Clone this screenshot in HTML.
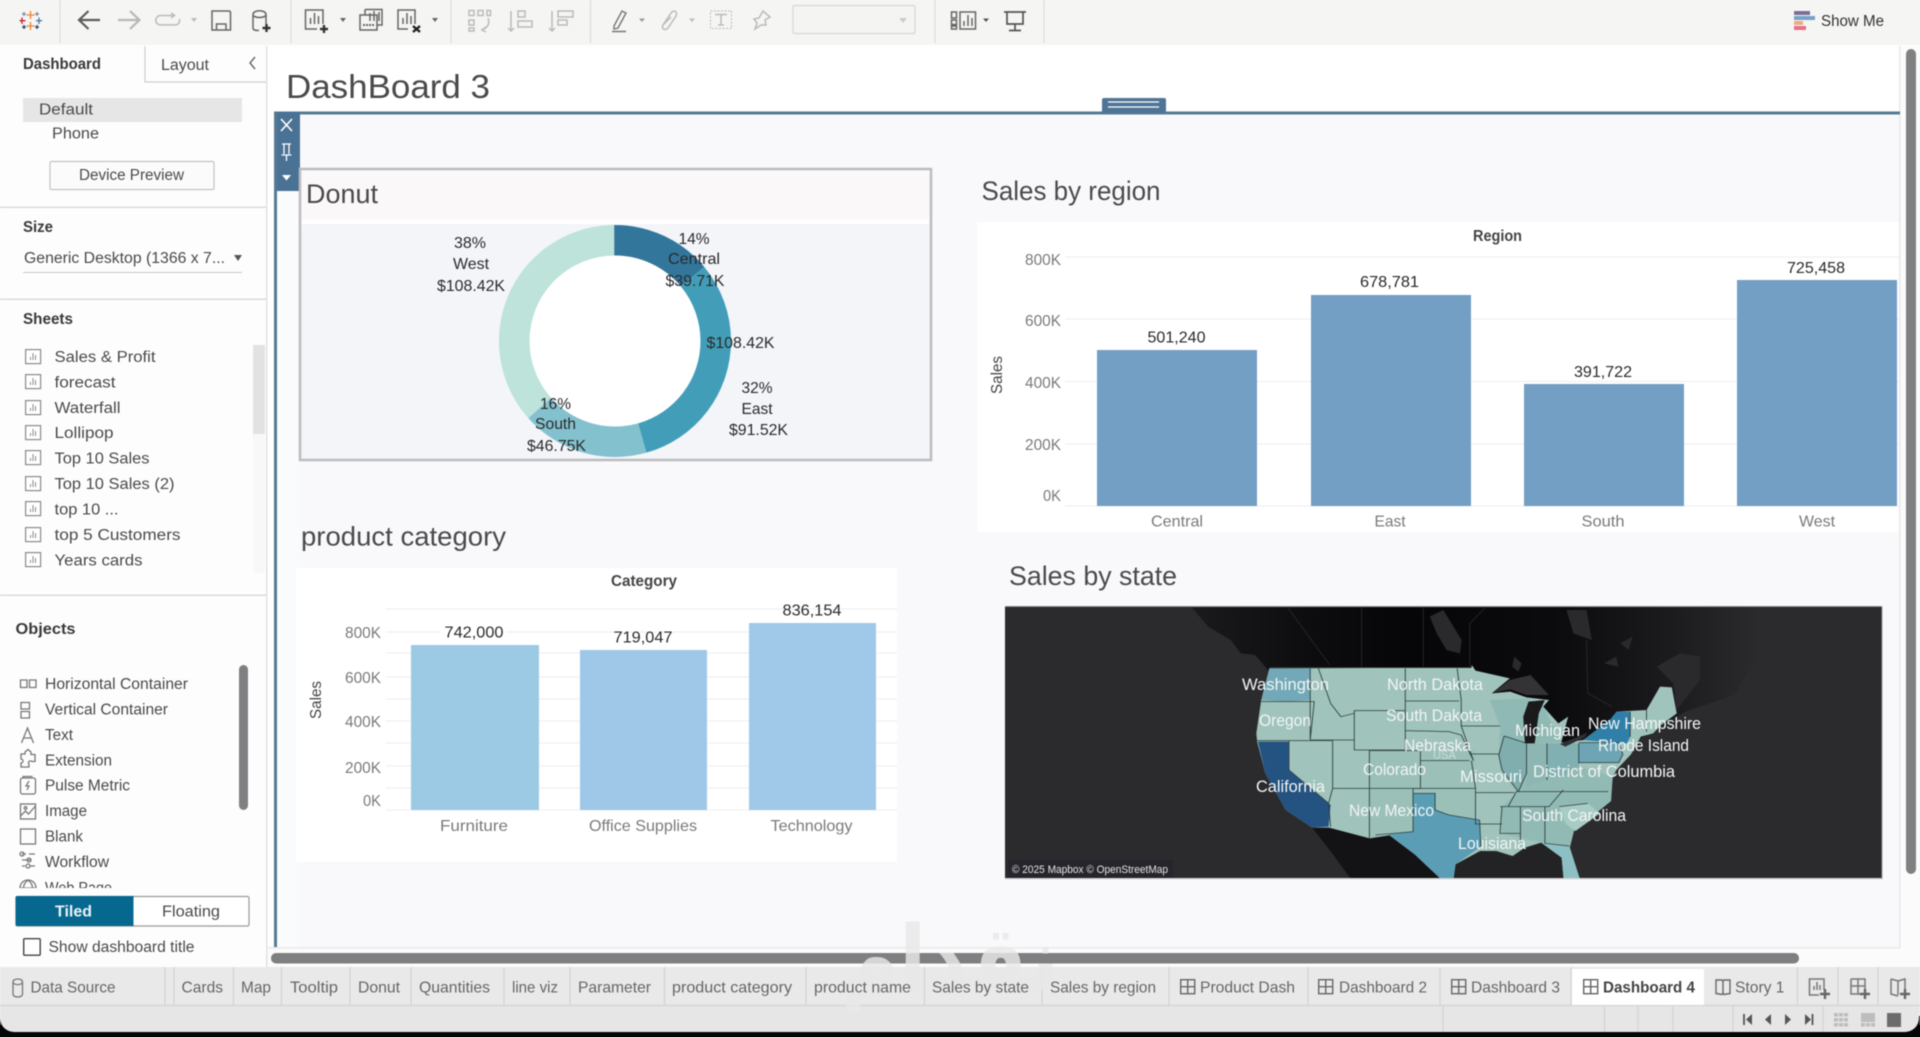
<!DOCTYPE html>
<html lang="en"><head><meta charset="utf-8"><title>DashBoard 3</title>
<style>
html,body{margin:0;padding:0;width:1920px;height:1037px;overflow:hidden;background:linear-gradient(#f8f8f8 0,#f8f8f8 1025px,#000 1025px)}
svg{display:block;filter:blur(.4px)}
text{font-family:"Liberation Sans",sans-serif;font-size:15.5px;fill:#4a4a4a}
.b{font-weight:bold;fill:#3a3a3a}
.g{fill:#7a7a7a;font-size:16px}
.k{fill:#2a2a2a;font-size:16px}
.m{text-anchor:middle}
.e{text-anchor:end}
.t{font-size:27px;fill:#4a4a4a}
.tab{fill:#666;font-size:16px}
.w{fill:#f2f5f5;font-size:16.5px}
.ic{fill:none;stroke:#666;stroke-width:1.5}
.ig{fill:none;stroke:#bbb;stroke-width:1.5}
.io{fill:none;stroke:#777;stroke-width:1.3}
.bd{fill:none;stroke:#2c3f40;stroke-width:2.2}
</style></head><body>
<svg xmlns="http://www.w3.org/2000/svg" width="1920" height="1037" viewBox="0 0 1920 1037">
<defs>
<g id="si"><rect x=".6" y=".6" width="15" height="14" fill="#fff" stroke="#8a8a8a" stroke-width="1.2"/><path d="M5.5 11V8M8 11V4M10.5 11V6" stroke="#8a8a8a" fill="none"/></g>
<g id="di"><rect x=".7" y=".7" width="14" height="14" fill="none" stroke="#666" stroke-width="1.4"/><path d="M7.7 .7V14.7M.7 7.7H14.7" stroke="#666" stroke-width="1.4"/></g>
<g id="sb"><path d="M1 1H7L8 2L8 14L7 15.5L1 14.5Z M8 2L9 1H15V14.5L9 15.5L8 14" fill="none" stroke="#666" stroke-width="1.4"/></g>
<clipPath id="mc"><rect x="12" y="22" width="2149" height="816"/></clipPath>
<clipPath id="oc"><rect x="0" y="670" width="235" height="218"/></clipPath>
<linearGradient id="ca" gradientUnits="userSpaceOnUse" x1="480" y1="0" x2="1860" y2="0">
<stop offset="0" stop-color="#1a1a1c"/><stop offset=".2" stop-color="#0d0d0f"/><stop offset=".38" stop-color="#060608"/><stop offset=".65" stop-color="#0c0c0e"/><stop offset=".85" stop-color="#1c1c1e"/><stop offset="1" stop-color="#2b2b2d"/>
</linearGradient>
</defs>

<rect width="1920" height="1037" fill="#fff"/>

<!-- canvas -->
<rect x="267" y="46" width="1633" height="66" fill="#fff"/>
<rect x="274" y="112" width="1626" height="835" fill="#f9f9fb"/>
<rect x="267" y="947" width="1653" height="20" fill="#fbfbfb"/>
<rect x="1900" y="46" width="20" height="921" fill="#fbfbfb"/>
<rect x="267" y="947" width="1633" height="1.5" fill="#eaeaea"/>
<rect x="1899" y="46" width="1.5" height="902" fill="#e8e8e8"/>

<text x="286" y="98" class="t" style="font-size:33px" textLength="204" lengthAdjust="spacingAndGlyphs">DashBoard 3</text>
<rect x="274" y="111.5" width="1626" height="3" fill="#567a94"/>
<rect x="274" y="112" width="3" height="835" fill="#567a94"/>
<path d="M1102 113V100Q1102 98 1104 98H1164Q1166 98 1166 100V113Z" fill="#4f7596"/>
<path d="M1108 102H1159M1108 107H1159" stroke="#fff" stroke-width="1.3"/>
<rect x="277" y="112" width="23" height="79" fill="#4a7295"/>
<rect x="277" y="191" width="23" height="756" fill="#fafbfc"/>
<path d="M281 119L292 131M292 119L281 131" stroke="#fff" stroke-width="1.6"/>
<path d="M282 144H291M284 144V154M289 144V154M281.500 155H291.500M286.500 155V161" stroke="#fff" stroke-width="1.3" fill="none"/>
<path d="M282 175H291L286.500 180.500Z" fill="#fff"/>

<!-- donut box -->
<rect x="300" y="168" width="631" height="292" fill="#f3f5f9"/>
<rect x="300" y="168" width="631" height="52" fill="#fbf8f9"/>
<rect x="302" y="220" width="627" height="4" fill="#fff"/>
<rect x="300" y="169" width="631" height="291" fill="none" stroke="#bcbcc0" stroke-width="2.5"/>
<text x="306" y="203" class="t" textLength="72" lengthAdjust="spacingAndGlyphs">Donut</text>
<circle cx="615" cy="341" r="85.500" fill="#fff"/>
<g transform="rotate(-90 615 341)" fill="none" stroke-width="30.500">
<circle cx="615" cy="341" r="100.750" pathLength="100" stroke="#bde3da" stroke-dasharray="36.500 63.500" stroke-dashoffset="-63.500"/>
<circle cx="615" cy="341" r="100.750" pathLength="100" stroke="#33769c" stroke-dasharray="14 86" stroke-dashoffset="0"/>
<circle cx="615" cy="341" r="100.750" pathLength="100" stroke="#429eb8" stroke-dasharray="31.700 68.300" stroke-dashoffset="-14"/>
<circle cx="615" cy="341" r="100.750" pathLength="100" stroke="#84c1cf" stroke-dasharray="17.800 82.200" stroke-dashoffset="-45.700"/>
</g>
<text x="470" y="248" class="k m" textLength="32" lengthAdjust="spacingAndGlyphs">38%</text>
<text x="471" y="269" class="k m" textLength="36" lengthAdjust="spacingAndGlyphs">West</text>
<text x="471" y="291" class="k m" textLength="68" lengthAdjust="spacingAndGlyphs">$108.42K</text>
<text x="694" y="244" class="k m" textLength="31" lengthAdjust="spacingAndGlyphs">14%</text>
<text x="694" y="264" class="k m" textLength="52" lengthAdjust="spacingAndGlyphs">Central</text>
<text x="695" y="286" class="k m" textLength="59" lengthAdjust="spacingAndGlyphs">$39.71K</text>
<text x="706.500" y="348" class="k" textLength="68" lengthAdjust="spacingAndGlyphs">$108.42K</text>
<text x="757" y="393" class="k m" textLength="31" lengthAdjust="spacingAndGlyphs">32%</text>
<text x="757" y="414" class="k m" textLength="31" lengthAdjust="spacingAndGlyphs">East</text>
<text x="758.500" y="435" class="k m" textLength="59" lengthAdjust="spacingAndGlyphs">$91.52K</text>
<text x="555.500" y="409" class="k m" textLength="31" lengthAdjust="spacingAndGlyphs">16%</text>
<text x="555.500" y="429" class="k m" textLength="41" lengthAdjust="spacingAndGlyphs">South</text>
<text x="556.500" y="451" class="k m" textLength="59" lengthAdjust="spacingAndGlyphs">$46.75K</text>

<!-- sales by region -->
<text x="981.500" y="200" class="t" textLength="179" lengthAdjust="spacingAndGlyphs">Sales by region</text>
<rect x="977" y="222" width="922" height="310" fill="#fff"/>
<text x="1497.500" y="241" class="m b" style="fill:#444" textLength="49" lengthAdjust="spacingAndGlyphs">Region</text>
<path d="M1065 257H1899M1065 319H1899M1065 381.500H1899M1065 444H1899M1065 506H1899" stroke="#f0f0f2" stroke-width="1.2"/>
<g fill="#749fc5"><rect x="1097" y="350" width="160" height="156"/><rect x="1311" y="295" width="160" height="211"/><rect x="1524" y="384" width="160" height="122"/><rect x="1737" y="280" width="160" height="226"/></g>
<text x="1061" y="265" class="g e" textLength="36" lengthAdjust="spacingAndGlyphs">800K</text>
<text x="1061" y="326" class="g e" textLength="36" lengthAdjust="spacingAndGlyphs">600K</text>
<text x="1061" y="388" class="g e" textLength="36" lengthAdjust="spacingAndGlyphs">400K</text>
<text x="1061" y="450" class="g e" textLength="36" lengthAdjust="spacingAndGlyphs">200K</text>
<text x="1061" y="501" class="g e" textLength="18" lengthAdjust="spacingAndGlyphs">0K</text>
<text x="1176.500" y="342.500" class="k m" textLength="58" lengthAdjust="spacingAndGlyphs">501,240</text>
<text x="1389.500" y="287" class="k m" textLength="59" lengthAdjust="spacingAndGlyphs">678,781</text>
<text x="1603" y="377" class="k m" textLength="58" lengthAdjust="spacingAndGlyphs">391,722</text>
<text x="1816" y="273" class="k m" textLength="58" lengthAdjust="spacingAndGlyphs">725,458</text>
<text x="1177" y="526.500" class="g m" textLength="52" lengthAdjust="spacingAndGlyphs">Central</text>
<text x="1390" y="526.500" class="g m" textLength="31" lengthAdjust="spacingAndGlyphs">East</text>
<text x="1603" y="526.500" class="g m" textLength="43" lengthAdjust="spacingAndGlyphs">South</text>
<text x="1817" y="526.500" class="g m" textLength="36" lengthAdjust="spacingAndGlyphs">West</text>
<text transform="translate(1002 375) rotate(-90)" class="m" style="fill:#444" textLength="38" lengthAdjust="spacingAndGlyphs">Sales</text>

<!-- product category -->
<text x="301" y="545.500" class="t" textLength="205" lengthAdjust="spacingAndGlyphs">product category</text>
<rect x="296" y="568" width="601" height="294" fill="#fff"/>
<text x="644" y="586" class="m b" style="fill:#444" textLength="66" lengthAdjust="spacingAndGlyphs">Category</text>
<path d="M386 609H897M386 632H897M386 653H897M386 677H897M386 699H897M386 721H897M386 743H897M386 766H897M386 788H897M386 810H897" stroke="#f0f0f2" stroke-width="1.2"/>
<rect x="411" y="645" width="128" height="165" fill="#9ccae5"/>
<rect x="580" y="650" width="127" height="160" fill="#9fc7e8"/>
<rect x="749" y="623" width="127" height="187" fill="#a0c8e8"/>
<text x="381" y="638" class="g e" textLength="36" lengthAdjust="spacingAndGlyphs">800K</text>
<text x="381" y="683" class="g e" textLength="36" lengthAdjust="spacingAndGlyphs">600K</text>
<text x="381" y="727" class="g e" textLength="36" lengthAdjust="spacingAndGlyphs">400K</text>
<text x="381" y="773" class="g e" textLength="36" lengthAdjust="spacingAndGlyphs">200K</text>
<text x="381" y="806" class="g e" textLength="18" lengthAdjust="spacingAndGlyphs">0K</text>
<rect x="440" y="622" width="66" height="20" fill="#fff"/>
<text x="474" y="637.500" class="k m" textLength="59" lengthAdjust="spacingAndGlyphs">742,000</text>
<text x="643" y="642.500" class="k m" textLength="59" lengthAdjust="spacingAndGlyphs">719,047</text>
<text x="812" y="615.500" class="k m" textLength="59" lengthAdjust="spacingAndGlyphs">836,154</text>
<text x="474" y="831" class="g m" textLength="68" lengthAdjust="spacingAndGlyphs">Furniture</text>
<text x="643" y="831" class="g m" textLength="108" lengthAdjust="spacingAndGlyphs">Office Supplies</text>
<text x="811.500" y="831" class="g m" textLength="82" lengthAdjust="spacingAndGlyphs">Technology</text>
<text transform="translate(321 700) rotate(-90)" class="m" style="fill:#444" textLength="38" lengthAdjust="spacingAndGlyphs">Sales</text>

<!-- map -->
<text x="1009" y="585" class="t" textLength="168" lengthAdjust="spacingAndGlyphs">Sales by state</text>
<rect x="1005" y="607" width="877" height="272" fill="#2b2b2d"/>
<g transform="translate(1000 600) scale(.40816 .33333)" clip-path="url(#mc)">
<path d="M470 22L1860 22L1880 120L1800 285L1680 335L1550 430L1300 450L660 215L625 165L590 160L565 120L510 80Z" fill="url(#ca)"/>
<path d="M1053 50L1086 30L1131 120L1127 160L1094 150L1070 100ZM1388 30L1437 30L1450 120L1405 100ZM1609 200L1666 160L1715 170L1715 240L1658 330L1650 250ZM1260 170L1278 190L1270 215L1255 200ZM1480 190L1510 170L1515 200ZM1520 130L1550 110L1540 150Z" fill="#2a2a2c"/>
<path d="M886 22V200M1037 22V200M1188 25L1151 70V200M706 25L808 195M1437 120L1440 280L1500 320" stroke="#2c2c2e" stroke-width="2" fill="none"/>
<path d="M1176 753L1116 793L1111 838H1380L1376 773L1326 728L1286 743L1256 768L1216 753Z" fill="#232325"/>
<path d="M765 683L806 683L906 715L951 703L1016 763L1081 838L860 838L820 770Z" fill="#131315"/>
<path d="M660 205L1155 203L1156 195L1165 212L1249 235L1205 280L1250 275L1290 292L1345 300L1331 320L1368 370L1392 350L1375 428L1429 420L1494 360L1511 335L1584 330L1617 260L1646 262L1658 340L1620 375L1600 400L1570 410L1546 463L1510 510L1501 533L1497 603L1406 693L1396 743L1421 838L1381 838L1376 773L1326 728L1286 743L1256 768L1216 753L1176 753L1116 793L1111 838L1081 838L1016 763L951 703L906 715L806 683L765 683L700 630L650 520L630 425L628 400L640 300Z" fill="#a0c3bb"/>
<path d="M1225 378L1290 430L1290 520L1420 500L1500 530L1497 603L1406 693L1396 743L1326 728L1230 700L1230 620L1270 575L1222 465Z" fill="#92bab4"/>
<path d="M905 452H1165V660L1012 695L905 715Z" fill="#9bc0b8"/>
<path d="M1200 300L1290 296L1331 320L1375 428L1290 430L1235 408Z" fill="#8fb9b4"/>
<path d="M660 205H760V300L700 305L640 300Z" fill="#72a8b7"/>
<path d="M632 425H708V510L810 615L805 680L765 683L700 630L650 520Z" fill="#245382"/>
<path d="M1012 580H1066V630L1100 645L1175 660L1178 740L1116 793L1111 838L1081 838L1016 763L951 703L1012 695Z" fill="#5b9db4"/>
<path d="M1429 420L1494 360L1511 335L1544 335V410L1536 430Z" fill="#2f7fa8"/>
<path d="M1418 428H1516L1526 463L1516 488H1418Z" fill="#6da5b4"/>
<path d="M1235 408L1290 430V520L1270 575L1230 510L1222 465Z" fill="#80aeae"/>
<path d="M1290 430H1340V540L1290 560Z" fill="#8db6b2"/>
<path d="M1340 430H1418V500L1380 530L1340 530Z" fill="#80b0b2"/>
<path d="M1326 728L1396 743L1421 838L1381 838L1376 773Z" fill="#8cc0c4"/>
<path d="M1370 620L1440 610L1470 640L1410 693L1385 670Z" fill="#a8cbc4"/>
<path d="M1282 350L1295 305L1335 300L1320 340L1310 430L1286 430Z" fill="#1a1a1c"/>
<path d="M1209 278L1249 240L1300 225L1345 285L1290 285L1250 268Z" fill="#333335"/>
<path d="M1372 432L1440 398L1432 412L1385 440Z" fill="#303032"/>
<g class="bd">
<path d="M660 203H1155M760 205V420M640 305L700 305L770 305L760 420"/>
<path d="M780 205L810 310L835 350L868 340"/>
<path d="M868 332H993V450H868ZM760 420H868"/>
<path d="M993 205V332M993 303H1125M993 392L1100 395L1130 405L1160 482"/>
<path d="M1030 452V482H1150M905 452H1030V565H905Z"/>
<path d="M815 422V565H905M630 422H815M708 422V510L805 610L810 680M815 565L805 610"/>
<path d="M905 565V715M1012 565V695L920 705M1012 565H1165"/>
<path d="M1012 580H1066V630L1100 645L1175 660L1178 740"/>
<path d="M1155 482L1165 565V672L1175 672M1165 578H1260M1175 672H1230"/>
<path d="M1120 205L1130 300V378H1225M1150 462H1222M1130 378L1160 482"/>
<path d="M1235 408L1290 430V520L1270 575L1230 510L1222 465L1235 408"/>
<path d="M1340 430V540M1418 430V490M1418 428H1516L1526 463L1516 488H1418"/>
<path d="M1225 620H1345M1230 620L1225 700H1275M1275 620V725M1335 620V730L1395 738M1245 620L1265 575H1490M1380 570L1345 620M1370 620L1440 610"/>
<path d="M1544 335V410M1584 330V395"/>
</g>
</g>
<rect x="1005" y="878" width="877" height="1.500" fill="#d8d8d8"/>
<rect x="1005" y="606" width="877" height="1" fill="#888"/>
<rect x="1881.500" y="607" width="1" height="272" fill="#999"/>
<rect x="1008" y="860" width="165" height="18" fill="#25252b"/>
<text x="1012" y="873" style="font-size:11px;fill:#e4e4e8" textLength="156" lengthAdjust="spacingAndGlyphs">© 2025 Mapbox © OpenStreetMap</text>
<text x="1433" y="759" style="font-size:12px;fill:#c8dcd8" textLength="23" lengthAdjust="spacingAndGlyphs">USA</text>
<text x="1242" y="690" class="w" textLength="87" lengthAdjust="spacingAndGlyphs">Washington</text>
<text x="1387" y="690" class="w" textLength="96" lengthAdjust="spacingAndGlyphs">North Dakota</text>
<text x="1259" y="726" class="w" textLength="52" lengthAdjust="spacingAndGlyphs">Oregon</text>
<text x="1386" y="721" class="w" textLength="96" lengthAdjust="spacingAndGlyphs">South Dakota</text>
<text x="1515" y="736" class="w" textLength="65" lengthAdjust="spacingAndGlyphs">Michigan</text>
<text x="1588" y="729" class="w" textLength="113" lengthAdjust="spacingAndGlyphs">New Hampshire</text>
<text x="1598" y="751" class="w" textLength="91" lengthAdjust="spacingAndGlyphs">Rhode Island</text>
<text x="1404" y="751" class="w" textLength="67" lengthAdjust="spacingAndGlyphs">Nebraska</text>
<text x="1363" y="775" class="w" textLength="63" lengthAdjust="spacingAndGlyphs">Colorado</text>
<text x="1460" y="782" class="w" textLength="62" lengthAdjust="spacingAndGlyphs">Missouri</text>
<text x="1533" y="777" class="w" textLength="142" lengthAdjust="spacingAndGlyphs">District of Columbia</text>
<text x="1256" y="792" class="w" textLength="69" lengthAdjust="spacingAndGlyphs">California</text>
<text x="1349" y="816" class="w" textLength="85" lengthAdjust="spacingAndGlyphs">New Mexico</text>
<text x="1522" y="821" class="w" textLength="104" lengthAdjust="spacingAndGlyphs">South Carolina</text>
<text x="1458" y="849" class="w" textLength="68" lengthAdjust="spacingAndGlyphs">Louisiana</text>

<!-- scrollbars -->
<rect x="1906" y="49" width="10" height="825" rx="5" fill="#808082"/>
<rect x="271" y="953" width="1528" height="10.500" rx="5" fill="#7f7f82"/>

<!-- left panel -->
<rect x="0" y="46" width="266" height="921" fill="#fdfdfd"/>
<rect x="266" y="46" width="1.500" height="921" fill="#e2e2e2"/>
<path d="M145 46V82H266" fill="none" stroke="#cfcfcf" stroke-width="1.2"/>
<text x="23" y="69" class="b" textLength="78" lengthAdjust="spacingAndGlyphs">Dashboard</text>
<text x="161" y="70" textLength="48" lengthAdjust="spacingAndGlyphs">Layout</text>
<path d="M255 57L250 63L255 69" fill="none" stroke="#666" stroke-width="1.4"/>
<rect x="23" y="98" width="219" height="24" fill="#e6e6e6"/>
<text x="39" y="114.500" textLength="54" lengthAdjust="spacingAndGlyphs">Default</text>
<text x="52" y="138.500" textLength="47" lengthAdjust="spacingAndGlyphs">Phone</text>
<rect x="50" y="161.500" width="164" height="28" rx="1.500" fill="#fcfbfc" stroke="#c4c4c4" stroke-width="1.200"/>
<text x="79" y="180" textLength="105" lengthAdjust="spacingAndGlyphs">Device Preview</text>
<rect x="0" y="206.500" width="266" height="1.400" fill="#d8d8d8"/>
<text x="23" y="232" class="b" textLength="30" lengthAdjust="spacingAndGlyphs">Size</text>
<text x="24" y="263" textLength="201" lengthAdjust="spacingAndGlyphs">Generic Desktop (1366 x 7...</text>
<path d="M234 255H242L238 261Z" fill="#555"/>
<rect x="23" y="272" width="219" height="1" fill="#c8c8c8"/>
<rect x="0" y="298.500" width="266" height="1.400" fill="#d8d8d8"/>
<text x="23" y="324" class="b" textLength="50" lengthAdjust="spacingAndGlyphs">Sheets</text>
<rect x="253" y="345" width="12" height="228" fill="#f8f8f8"/>
<rect x="253" y="345" width="12" height="89" fill="#e2e2e2"/>
<use href="#si" x="25" y="349"/><text x="54.500" y="362" textLength="101" lengthAdjust="spacingAndGlyphs">Sales &amp; Profit</text>
<use href="#si" x="25" y="374"/><text x="54.500" y="387.500" textLength="61" lengthAdjust="spacingAndGlyphs">forecast</text>
<use href="#si" x="25" y="400"/><text x="54.500" y="413" textLength="66" lengthAdjust="spacingAndGlyphs">Waterfall</text>
<use href="#si" x="25" y="425"/><text x="54.500" y="438" textLength="59" lengthAdjust="spacingAndGlyphs">Lollipop</text>
<use href="#si" x="25" y="450"/><text x="54.500" y="463.500" textLength="95" lengthAdjust="spacingAndGlyphs">Top 10 Sales</text>
<use href="#si" x="25" y="476"/><text x="54.500" y="489" textLength="120" lengthAdjust="spacingAndGlyphs">Top 10 Sales (2)</text>
<use href="#si" x="25" y="501"/><text x="54.500" y="514.500" textLength="64" lengthAdjust="spacingAndGlyphs">top 10 ...</text>
<use href="#si" x="25" y="527"/><text x="54.500" y="540" textLength="126" lengthAdjust="spacingAndGlyphs">top 5 Customers</text>
<use href="#si" x="25" y="552"/><text x="54.500" y="565.500" textLength="88" lengthAdjust="spacingAndGlyphs">Years cards</text>
<rect x="0" y="594.500" width="266" height="1.400" fill="#d8d8d8"/>
<text x="15.500" y="634" class="b" textLength="60" lengthAdjust="spacingAndGlyphs">Objects</text>
<g clip-path="url(#oc)">
<text x="45" y="689" textLength="143" lengthAdjust="spacingAndGlyphs">Horizontal Container</text>
<text x="45" y="714.500" textLength="123" lengthAdjust="spacingAndGlyphs">Vertical Container</text>
<text x="45" y="740" textLength="28" lengthAdjust="spacingAndGlyphs">Text</text>
<text x="45" y="765.500" textLength="67" lengthAdjust="spacingAndGlyphs">Extension</text>
<text x="45" y="790.500" textLength="85" lengthAdjust="spacingAndGlyphs">Pulse Metric</text>
<text x="45" y="816" textLength="42" lengthAdjust="spacingAndGlyphs">Image</text>
<text x="45" y="841.500" textLength="38" lengthAdjust="spacingAndGlyphs">Blank</text>
<text x="45" y="867" textLength="64" lengthAdjust="spacingAndGlyphs">Workflow</text>
<text x="45" y="893" textLength="67" lengthAdjust="spacingAndGlyphs">Web Page</text>
<g class="io">
<path d="M20.500 680h6.500v7.500h-6.500zM29.500 680h6.500v7.500h-6.500z"/>
<path d="M21 702.500h8.500v6.500h-8.500zM21 711.500h8.500v6.500h-8.500z"/>
<path d="M21.500 743L27.500 728L33.500 743M23.500 738H31.500"/>
<path d="M25 752l3-2.500 3 2.500v2.500h4v7h-3a2 2 0 0 0-3 3v2.500h-8v-4a2 2 0 0 0 0-4v-5h4z"/>
<rect x="20.500" y="778" width="15" height="16" rx="2"/><path d="M23 778v-1.500h9.500M29 781l-3 5h3l-2 4"/>
<rect x="20.500" y="804" width="15" height="15"/><path d="M20.500 816l5-5 3 3 7-8"/><circle cx="25.500" cy="808" r="1.300"/>
<rect x="20.500" y="829" width="15" height="15"/>
<path d="M22 854h4M29 854h6M22 860h9M22 866h3M30 866h5M20 854a2 2 0 1 0 4 0a2 2 0 1 0-4 0M27 860a2 2 0 1 0 4 0a2 2 0 1 0-4 0M26 866a2 2 0 1 0 4 0a2 2 0 1 0-4 0"/>
<circle cx="28" cy="888" r="8"/><path d="M20 888h16M28 880c-6 5-6 11 0 16M28 880c6 5 6 11 0 16"/>
</g>
</g>
<rect x="239" y="665" width="9" height="145" rx="4.500" fill="#808082"/>
<rect x="16" y="896.500" width="233" height="29.500" rx="1.500" fill="#fff" stroke="#9a9a9a" stroke-width="1.200"/>
<path d="M17 896H133.500V926H17A1.500 1.500 0 0 1 15.500 924.500V897.500A1.500 1.500 0 0 1 17 896Z" fill="#07688f"/>
<text x="73.500" y="916.500" class="m b" style="fill:#eaf3f7" textLength="37" lengthAdjust="spacingAndGlyphs">Tiled</text>
<text x="191" y="916.500" class="m" textLength="58" lengthAdjust="spacingAndGlyphs">Floating</text>
<rect x="23.700" y="938.700" width="16.500" height="16.500" rx="1" fill="#fff" stroke="#444" stroke-width="1.400"/>
<text x="48.500" y="952" textLength="146" lengthAdjust="spacingAndGlyphs">Show dashboard title</text>

<!-- toolbar -->
<rect x="0" y="0" width="1920" height="45" fill="#f5f5f4"/>
<path d="M60 0V43M291 0V43M451 0V43M590.500 0V43M935 0V43M1044 0V43" stroke="#dcdcdc" stroke-width="1.200"/>
<g stroke-width="1.300" fill="none">
<path d="M30.500 11V19M26.500 15H34.500M30.500 22V30M26.500 26H34.500" stroke="#e8862c"/>
<path d="M22 17.500V24M19.500 20.700H25.500" stroke="#c72037"/>
<path d="M39 17.500V24M36 20.700H42" stroke="#4e7c9c"/>
<path d="M24 12V16M22 14H26M37 12V16M35 14H39" stroke="#7c86a2"/>
<path d="M24 25V29M22 27H26M37 25V29M35 27H39" stroke="#1f447e"/>
</g>
<path d="M100 20H79M88.500 11L79 20L88.500 29" fill="none" stroke="#5c5c5c" stroke-width="2.200"/>
<path d="M118 20H139M130 11L139.500 20L130 29" fill="none" stroke="#b8b8b8" stroke-width="2.200"/>
<path d="M174 15.500H160.500a4.700 4.700 0 0 0 0 9.400H175a4.700 4.700 0 0 0 4.500-6M171 13l3.500 2.500-3.500 2.500" class="ig"/>
<path d="M191 18H197L194 22Z" fill="#bbb"/>
<path d="M212 11H229.500L230.500 12V30H212Z" class="ic"/><path d="M216.500 30V24H226V30" class="ic"/>
<path d="M253 14.500C253 9.500 266 9.500 266 14.500V24M253 14.500C253 18.500 266 18.500 266 14.500M253 14.500V28C253 30 255 30.500 259 30.500" class="ic"/>
<path d="M266.500 24V32M262.500 28H270.500" stroke="#333" stroke-width="2.400"/>
<path d="M323 24V10H305.500V29H317M310.500 24V18M314.500 24V13M318.500 24V16" class="ic"/>
<path d="M324 25V33M320 29H328" stroke="#333" stroke-width="2.400"/>
<path d="M340 18H346L343 22Z" fill="#666"/>
<path d="M365 9.500H382V25H377M365 9.500V15M360 15H377V30H360ZM370 13V21M374 11V21M379 12V21" class="ic"/>
<path d="M363 25H374" stroke="#666" stroke-width="2" stroke-dasharray="2 1"/>
<path d="M415 24V10H398V29H408M403 24V18M407 24V13M411 24V16" class="ic"/>
<path d="M413 26L420 32M420 26L413 32" stroke="#222" stroke-width="2.400"/>
<path d="M432 18H438L435 22Z" fill="#666"/>
<g class="ig">
<path d="M469 10.500h5v5h-5zM478 10.500h5v5h-5zM487 10.500h3.500v5h-3.500zM469 20h5v5h-5zM469 28h5v3h-5zM488 18c2 6 0 10-7 12M486 27l-4 3 4 2"/>
<path d="M511 11V31M508 28l3 3 3-3M518 11h7v6h-7zM518 21h14v6h-14z"/>
<path d="M552 11V31M549 28l3 3 3-3M558 11h15v6h-15zM558 20h9v5h-9z"/>
</g>
<path d="M614 26L622 11L626 13L618 28L614 29ZM612 31.500H626" fill="none" stroke="#777" stroke-width="1.400"/>
<path d="M639 18.500H645L642 22Z" fill="#999"/>
<path d="M663 25L671 13C674 9 678 12 676 16L668 28C665 31 661 29 663 25L671 17" class="ig"/>
<path d="M689 18.500H695L692 22Z" fill="#bbb"/>
<rect x="710.500" y="11" width="21" height="17.500" fill="none" stroke="#bbb" stroke-dasharray="2 1.500"/>
<path d="M715 14.500H727M721 14.500V25M718 25H724" class="ig"/>
<path d="M763 11L770 17L765 20L766 25L761 25L755 29L757 23L754 19L759 18Z" class="ig"/>
<rect x="793" y="5.500" width="122" height="28" rx="1.500" fill="#f4f4f3" stroke="#d6d6d6" stroke-width="1.200"/>
<path d="M899 18H907L903 23Z" fill="#ccc"/>
<path d="M951.500 12h5v6h-5zM951.500 20h5v4.500h-5zM951.500 26h5v3h-5zM960 12h15.500v17H960ZM964 26V21M968 26V15M972 26V18" class="ic"/>
<path d="M983 18.500H989L986 22Z" fill="#555"/>
<path d="M1004 12H1026M1007 12.500V24H1023V12.500M1015 24V30.500M1009 30.500H1021" fill="none" stroke="#555" stroke-width="1.700"/>
<rect x="1794" y="11" width="16" height="4" fill="#7a6f97"/><rect x="1794" y="16" width="21" height="4" fill="#79a0c9"/><rect x="1794" y="21" width="9" height="4" fill="#eeaa80"/><rect x="1794" y="26" width="12" height="4" fill="#e8708a"/>
<text x="1821" y="26" style="fill:#333" textLength="63" lengthAdjust="spacingAndGlyphs">Show Me</text>

<!-- bottom -->
<rect x="0" y="967" width="1920" height="70" fill="#e9e9e9"/>
<rect x="0" y="1016" width="1920" height="21" fill="#050505"/>
<rect x="0" y="1004" width="1919" height="28" rx="14" fill="#e6e6e6"/>
<rect x="0" y="1004" width="1919" height="14" fill="#e6e6e6"/>
<rect x="0" y="1005" width="1920" height="1.200" fill="#d4d4d4"/>
<path d="M165 967V1005M174 967V1005M233.500 967V1005M281.500 967V1005M350 967V1005M411 967V1005M504 967V1005M570 967V1005M664.500 967V1005M806 967V1005M924.500 967V1005M1042 967V1005M1169 967V1005M1308 967V1005M1440 967V1005M1571 967V1005M1797.500 967V1005M1838 967V1005M1878 967V1005M1443 1006V1032M1604.500 1006V1032M1638 1006V1032M1673 1006V1032M1733 1006V1032M1823 1006V1032" stroke="#d2d2d2" stroke-width="1.200"/>
<rect x="1572" y="969" width="132" height="36" fill="#fff"/>

<!-- watermark, below the tab labels -->
<text x="950" y="990" dir="rtl" textLength="218" lengthAdjust="spacingAndGlyphs" style="font-family:'DejaVu Sans',sans-serif;font-size:90px;font-weight:bold;fill:#e8e8e8;fill-opacity:.82;text-anchor:middle">نقدام</text>

<path d="M13 982C13 978 22.500 978 22.500 982V994C22.500 998 13 998 13 994ZM13 982C13 985.500 22.500 985.500 22.500 982" fill="none" stroke="#777" stroke-width="1.300"/>
<text x="30.500" y="992.500" class="tab" textLength="85" lengthAdjust="spacingAndGlyphs">Data Source</text>
<text x="181.500" y="992.500" class="tab" textLength="41.500" lengthAdjust="spacingAndGlyphs">Cards</text>
<text x="241" y="992.500" class="tab" textLength="30" lengthAdjust="spacingAndGlyphs">Map</text>
<text x="290" y="992.500" class="tab" textLength="48" lengthAdjust="spacingAndGlyphs">Tooltip</text>
<text x="358" y="992.500" class="tab" textLength="42" lengthAdjust="spacingAndGlyphs">Donut</text>
<text x="419" y="992.500" class="tab" textLength="71" lengthAdjust="spacingAndGlyphs">Quantities</text>
<text x="512" y="992.500" class="tab" textLength="46" lengthAdjust="spacingAndGlyphs">line viz</text>
<text x="578" y="992.500" class="tab" textLength="73" lengthAdjust="spacingAndGlyphs">Parameter</text>
<text x="672" y="992.500" class="tab" textLength="120" lengthAdjust="spacingAndGlyphs">product category</text>
<text x="814" y="992.500" class="tab" textLength="97" lengthAdjust="spacingAndGlyphs">product name</text>
<text x="932" y="992.500" class="tab" textLength="97" lengthAdjust="spacingAndGlyphs">Sales by state</text>
<text x="1050" y="992.500" class="tab" textLength="106" lengthAdjust="spacingAndGlyphs">Sales by region</text>
<use href="#di" x="1180" y="979"/><text x="1200" y="992.500" class="tab" textLength="95" lengthAdjust="spacingAndGlyphs">Product Dash</text>
<use href="#di" x="1318" y="979"/><text x="1339" y="992.500" class="tab" textLength="88" lengthAdjust="spacingAndGlyphs">Dashboard 2</text>
<use href="#di" x="1451" y="979"/><text x="1471" y="992.500" class="tab" textLength="89" lengthAdjust="spacingAndGlyphs">Dashboard 3</text>
<use href="#di" x="1583" y="979"/><text x="1603" y="992.500" class="b tab" style="fill:#444" textLength="92" lengthAdjust="spacingAndGlyphs">Dashboard 4</text>
<use href="#sb" x="1715" y="979"/><text x="1735" y="992.500" class="tab" textLength="49.500" lengthAdjust="spacingAndGlyphs">Story 1</text>
<g class="ic" style="stroke:#777">
<path d="M1824 990V979H1809.500V995H1819M1814 990V986M1817 990V982M1820 990V985"/>
<path d="M1851 979H1865V990M1851 979V994H1861M1858 979V994M1851 986H1865"/>
<path d="M1891 979L1898 981L1905 979V991M1898 981V995M1891 979V994L1898 996"/>
</g>
<path d="M1825 989V999M1820 994H1830M1865 989V999M1860 994H1870M1905 989V999M1900 994H1910" stroke="#666" stroke-width="2.400"/>
<path d="M1744 1014V1025" stroke="#555" stroke-width="1.800"/><path d="M1752 1014V1025L1746 1019.500Z" fill="#555"/>
<path d="M1771 1014V1025L1765 1019.500Z" fill="#555"/>
<path d="M1785 1014V1025L1791 1019.500Z" fill="#555"/>
<path d="M1805 1014V1025L1811 1019.500Z" fill="#555"/><path d="M1812.500 1014V1025" stroke="#555" stroke-width="1.800"/>
<g fill="#bdbdbd">
<rect x="1834" y="1013" width="4" height="3.500"/><rect x="1839" y="1013" width="4" height="3.500"/><rect x="1844" y="1013" width="4" height="3.500"/>
<rect x="1834" y="1018" width="4" height="3.500"/><rect x="1839" y="1018" width="4" height="3.500"/><rect x="1844" y="1018" width="4" height="3.500"/>
<rect x="1834" y="1023" width="4" height="3.500"/><rect x="1839" y="1023" width="4" height="3.500"/><rect x="1844" y="1023" width="4" height="3.500"/>
<rect x="1861" y="1013" width="14" height="9"/>
<rect x="1861" y="1023" width="4" height="3.500"/><rect x="1866" y="1023" width="4" height="3.500"/><rect x="1871" y="1023" width="4" height="3.500"/>
</g>
<rect x="1887" y="1013" width="14" height="14" fill="#6c6c6c"/>
</svg>
</body></html>
